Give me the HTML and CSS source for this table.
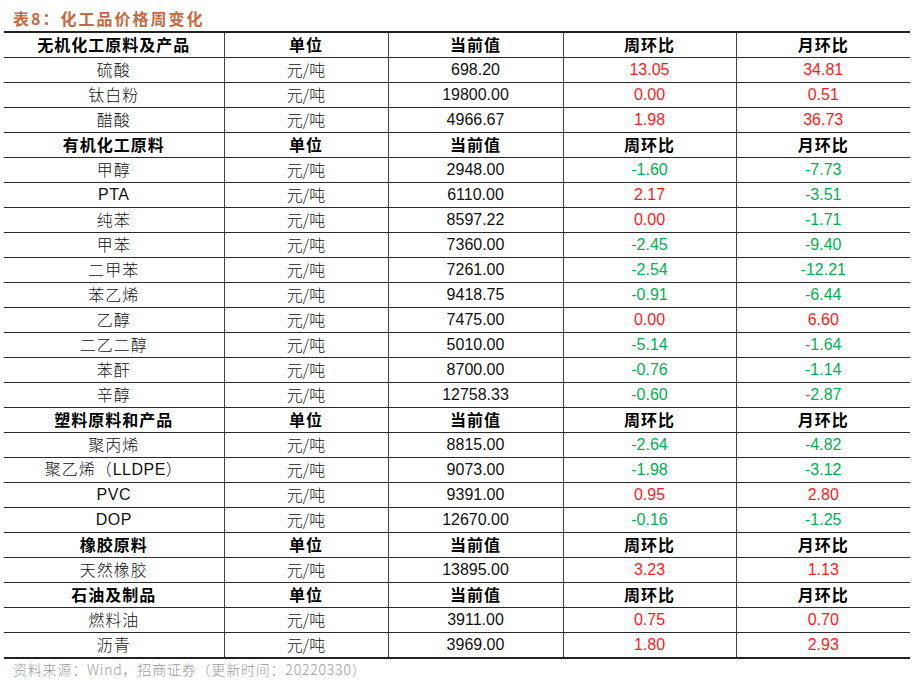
FILE: index.html
```html
<!DOCTYPE html>
<html lang="zh">
<head>
<meta charset="utf-8">
<link rel="stylesheet" href="styles.css">
</head>
<body>
<div class="title">表8：化工品价格周变化</div>
<table class="grid">
  <colgroup>
    <col class="c1"><col class="c2"><col class="c3"><col class="c4"><col class="c5">
  </colgroup>
  <tbody>
    <tr class="head"><td>无机化工原料及产品</td><td>单位</td><td>当前值</td><td>周环比</td><td>月环比</td></tr>
    <tr><td class="name">硫酸</td><td class="unit">元/吨</td><td class="num">698.20</td><td class="up">13.05</td><td class="up">34.81</td></tr>
    <tr><td class="name">钛白粉</td><td class="unit">元/吨</td><td class="num">19800.00</td><td class="up">0.00</td><td class="up">0.51</td></tr>
    <tr><td class="name">醋酸</td><td class="unit">元/吨</td><td class="num">4966.67</td><td class="up">1.98</td><td class="up">36.73</td></tr>
    <tr class="head"><td>有机化工原料</td><td>单位</td><td>当前值</td><td>周环比</td><td>月环比</td></tr>
    <tr><td class="name">甲醇</td><td class="unit">元/吨</td><td class="num">2948.00</td><td class="down">-1.60</td><td class="down">-7.73</td></tr>
    <tr><td class="name lat">PTA</td><td class="unit">元/吨</td><td class="num">6110.00</td><td class="up">2.17</td><td class="down">-3.51</td></tr>
    <tr><td class="name">纯苯</td><td class="unit">元/吨</td><td class="num">8597.22</td><td class="up">0.00</td><td class="down">-1.71</td></tr>
    <tr><td class="name">甲苯</td><td class="unit">元/吨</td><td class="num">7360.00</td><td class="down">-2.45</td><td class="down">-9.40</td></tr>
    <tr><td class="name">二甲苯</td><td class="unit">元/吨</td><td class="num">7261.00</td><td class="down">-2.54</td><td class="down">-12.21</td></tr>
    <tr><td class="name">苯乙烯</td><td class="unit">元/吨</td><td class="num">9418.75</td><td class="down">-0.91</td><td class="down">-6.44</td></tr>
    <tr><td class="name">乙醇</td><td class="unit">元/吨</td><td class="num">7475.00</td><td class="up">0.00</td><td class="up">6.60</td></tr>
    <tr><td class="name">二乙二醇</td><td class="unit">元/吨</td><td class="num">5010.00</td><td class="down">-5.14</td><td class="down">-1.64</td></tr>
    <tr><td class="name">苯酐</td><td class="unit">元/吨</td><td class="num">8700.00</td><td class="down">-0.76</td><td class="down">-1.14</td></tr>
    <tr><td class="name">辛醇</td><td class="unit">元/吨</td><td class="num">12758.33</td><td class="down">-0.60</td><td class="down">-2.87</td></tr>
    <tr class="head"><td>塑料原料和产品</td><td>单位</td><td>当前值</td><td>周环比</td><td>月环比</td></tr>
    <tr><td class="name">聚丙烯</td><td class="unit">元/吨</td><td class="num">8815.00</td><td class="down">-2.64</td><td class="down">-4.82</td></tr>
    <tr><td class="name">聚乙烯（<span class="lat">LLDPE</span>）</td><td class="unit">元/吨</td><td class="num">9073.00</td><td class="down">-1.98</td><td class="down">-3.12</td></tr>
    <tr><td class="name lat">PVC</td><td class="unit">元/吨</td><td class="num">9391.00</td><td class="up">0.95</td><td class="up">2.80</td></tr>
    <tr><td class="name lat">DOP</td><td class="unit">元/吨</td><td class="num">12670.00</td><td class="down">-0.16</td><td class="down">-1.25</td></tr>
    <tr class="head"><td>橡胶原料</td><td>单位</td><td>当前值</td><td>周环比</td><td>月环比</td></tr>
    <tr><td class="name">天然橡胶</td><td class="unit">元/吨</td><td class="num">13895.00</td><td class="up">3.23</td><td class="up">1.13</td></tr>
    <tr class="head"><td>石油及制品</td><td>单位</td><td>当前值</td><td>周环比</td><td>月环比</td></tr>
    <tr><td class="name">燃料油</td><td class="unit">元/吨</td><td class="num">3911.00</td><td class="up">0.75</td><td class="up">0.70</td></tr>
    <tr><td class="name">沥青</td><td class="unit">元/吨</td><td class="num">3969.00</td><td class="up">1.80</td><td class="up">2.93</td></tr>
  </tbody>
</table>
<div class="source">资料来源：Wind，招商证券（更新时间：20220330）</div>
</body>
</html>
```

FILE: styles.css
```css
html, body {
  margin: 0;
  padding: 0;
  background: #ffffff;
}
body {
  width: 919px;
  height: 682px;
  overflow: hidden;
  font-family: "Liberation Sans", "Noto Sans CJK SC", sans-serif;
}
.title {
  height: 31px;
  box-sizing: border-box;
  padding: 8px 0 0 13px;
  font-family: "Noto Sans CJK SC", sans-serif;
  font-size: 16px;
  line-height: 20px;
  font-weight: 700;
  color: #c8683f;
  letter-spacing: 2px;
}
.grid {
  margin-left: 4px;
  width: 906px;
  border-collapse: collapse;
  table-layout: fixed;
}
.c1 { width: 220px; }
.c2 { width: 164px; }
.c3 { width: 175px; }
.c4 { width: 173px; }
.c5 { width: 174px; }
.grid td {
  height: 24px;
  padding: 0;
  text-align: center;
  vertical-align: middle;
  border-top: 1px solid #2a2a2a;
  border-bottom: 1px solid #2a2a2a;
  border-left: 1px solid #444444;
  font-size: 16px;
  line-height: 20px;
  color: #111111;
  white-space: nowrap;
}
.grid td:first-child {
  border-left: none;
}
.grid tr:first-child td {
  border-top: 2px solid #222222;
}
.grid tr:last-child td {
  border-bottom: 2px solid #222222;
}
.grid .head td,
.grid td.name,
.grid td.unit {
  height: 22px;
  padding-bottom: 2px;
}
.head td {
  font-family: "Noto Sans CJK SC", sans-serif;
  font-weight: 700;
  color: #000000;
  letter-spacing: 1px;
}
.name {
  font-family: "Noto Sans CJK SC", sans-serif;
  font-weight: 300;
  color: #2b2b33;
  letter-spacing: 1px;
}
.grid td.name.lat {
  height: 24px;
  padding-bottom: 0;
}
.name.lat, .name .lat {
  font-family: "Liberation Sans", sans-serif;
  font-weight: 400;
  color: #111111;
  letter-spacing: 0.5px;
}
.unit {
  font-family: "Noto Sans CJK SC", sans-serif;
  font-weight: 300;
  color: #1a1a1a;
}
.num {
  font-family: "Liberation Sans", sans-serif;
}
.grid td.up { color: #ff1a1a; }
.grid td.down { color: #00b050; }
.source {
  padding: 0 0 0 13px;
  font-family: "Noto Sans CJK SC", sans-serif;
  font-weight: 300;
  font-size: 14px;
  line-height: 20px;
  color: #9a9a9a;
  letter-spacing: 0.8px;
}
```
